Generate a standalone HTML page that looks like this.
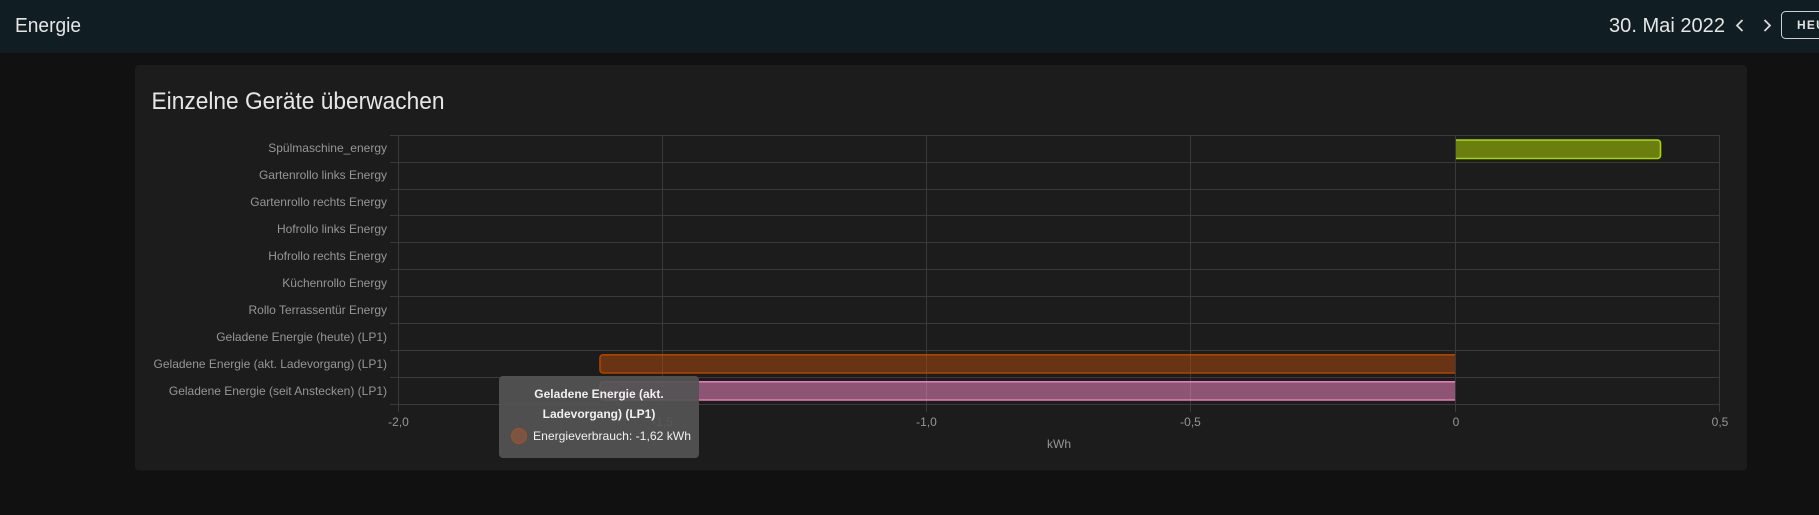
<!DOCTYPE html>
<html lang="de">
<head>
<meta charset="utf-8">
<title>Energie</title>
<style>
html,body{margin:0;padding:0;width:1819px;height:515px;overflow:hidden;background:#111111}
svg{display:block;position:absolute;left:0;top:0}
text{font-family:"Liberation Sans",sans-serif}
.y{font-size:12px;fill:#969696;text-anchor:end}
.x{font-size:12px;fill:#969696;text-anchor:middle}
.g{stroke:#3a3a3a;stroke-width:1;fill:none}
</style>
</head>
<body>
<svg width="1819" height="515" viewBox="0 0 1819 515" xmlns="http://www.w3.org/2000/svg">
  <rect x="0" y="0" width="1819" height="515" fill="#111111"/>
  <rect x="0" y="0" width="1819" height="53" fill="#101e24"/>
  <text x="15" y="32" font-size="20" fill="#e6e6e6" textLength="66" lengthAdjust="spacingAndGlyphs">Energie</text>
  <text x="1609" y="32" font-size="20" fill="#e6e6e6" textLength="116" lengthAdjust="spacingAndGlyphs">30. Mai 2022</text>
  <path d="M1742.5 20 L1737 25.5 L1742.5 31" fill="none" stroke="#d8d8d8" stroke-width="1.8"/>
  <path d="M1764.5 20 L1770 25.5 L1764.5 31" fill="none" stroke="#d8d8d8" stroke-width="1.8"/>
  <rect x="1781.5" y="11.5" width="80" height="27" rx="4" fill="none" stroke="#d0d0d0" stroke-width="1"/>
  <text x="1797" y="29" font-size="12" font-weight="700" fill="#e1e1e1" letter-spacing="1.2">HEUTE</text>

  <rect x="135" y="65" width="1612" height="405.5" rx="4" fill="#1c1c1c"/>
  <text x="151.5" y="109" font-size="24" fill="#e6e6e6" textLength="293" lengthAdjust="spacingAndGlyphs">Einzelne Geräte überwachen</text>

  <path class="g" d="M390 135.5H1720M390 162.5H1720M390 189.5H1720M390 215.5H1720M390 242.5H1720M390 269.5H1720M390 296.5H1720M390 323.5H1720M390 350.5H1720M390 377.5H1720M390 404.5H1720"/>
  <path class="g" d="M398.5 135V412M662.5 135V412M926.5 135V412M1190.5 135V412M1455.5 135V412M1719.5 135V412"/>

  <text class="y" x="387" y="152">Spülmaschine_energy</text>
  <text class="y" x="387" y="179">Gartenrollo links Energy</text>
  <text class="y" x="387" y="206">Gartenrollo rechts Energy</text>
  <text class="y" x="387" y="233">Hofrollo links Energy</text>
  <text class="y" x="387" y="260">Hofrollo rechts Energy</text>
  <text class="y" x="387" y="287">Küchenrollo Energy</text>
  <text class="y" x="387" y="314">Rollo Terrassentür Energy</text>
  <text class="y" x="387" y="341">Geladene Energie (heute) (LP1)</text>
  <text class="y" x="387" y="368">Geladene Energie (akt. Ladevorgang) (LP1)</text>
  <text class="y" x="387" y="395">Geladene Energie (seit Anstecken) (LP1)</text>

  <path d="M1456 139.8H1657.5a3 3 0 0 1 3 3V155.5a3 3 0 0 1 -3 3H1456Z" fill="rgb(184,226,0)" fill-opacity="0.5"/>
  <path d="M1456 140.1H1657.5a3 3 0 0 1 3 3V155.5a3 3 0 0 1 -3 3H1456" fill="none" stroke="#a5d800" stroke-width="1.6"/>
  <path d="M1455 354.8H603a3 3 0 0 0 -3 3V370.5a3 3 0 0 0 3 3H1455Z" fill="rgb(180,76,10)" fill-opacity="0.5"/>
  <path d="M1455 354.8H603a3 3 0 0 0 -3 3V370a3 3 0 0 0 3 3H1455" fill="none" stroke="#b04300" stroke-width="1.6"/>
  <path d="M1455 381.8H603a3 3 0 0 0 -3 3V397.5a3 3 0 0 0 3 3H1455Z" fill="rgb(255,140,202)" fill-opacity="0.5"/>
  <path d="M1455 381.8H603a3 3 0 0 0 -3 3V397a3 3 0 0 0 3 3H1455" fill="none" stroke="#e67ab5" stroke-width="1.6"/>

  <text class="x" x="398.5" y="426">-2,0</text>
  <text class="x" x="662.5" y="426">-1,5</text>
  <text class="x" x="926.5" y="426">-1,0</text>
  <text class="x" x="1190.5" y="426">-0,5</text>
  <text class="x" x="1456" y="426">0</text>
  <text class="x" x="1720" y="426">0,5</text>
  <text class="x" x="1059" y="448">kWh</text>

  <rect x="499" y="376" width="200" height="82" rx="4" fill="#545454" fill-opacity="0.92"/>
  <text x="599" y="398" font-size="12" font-weight="700" fill="#f0f0f0" text-anchor="middle">Geladene Energie (akt.</text>
  <text x="599" y="418" font-size="12" font-weight="700" fill="#f0f0f0" text-anchor="middle">Ladevorgang) (LP1)</text>
  <circle cx="519" cy="436" r="7.5" fill="#7b5542" stroke="#a2521f" stroke-width="1"/>
  <text x="533" y="440" font-size="12" fill="#f0f0f0" textLength="158" lengthAdjust="spacingAndGlyphs">Energieverbrauch: -1,62 kWh</text>
</svg>
</body>
</html>
